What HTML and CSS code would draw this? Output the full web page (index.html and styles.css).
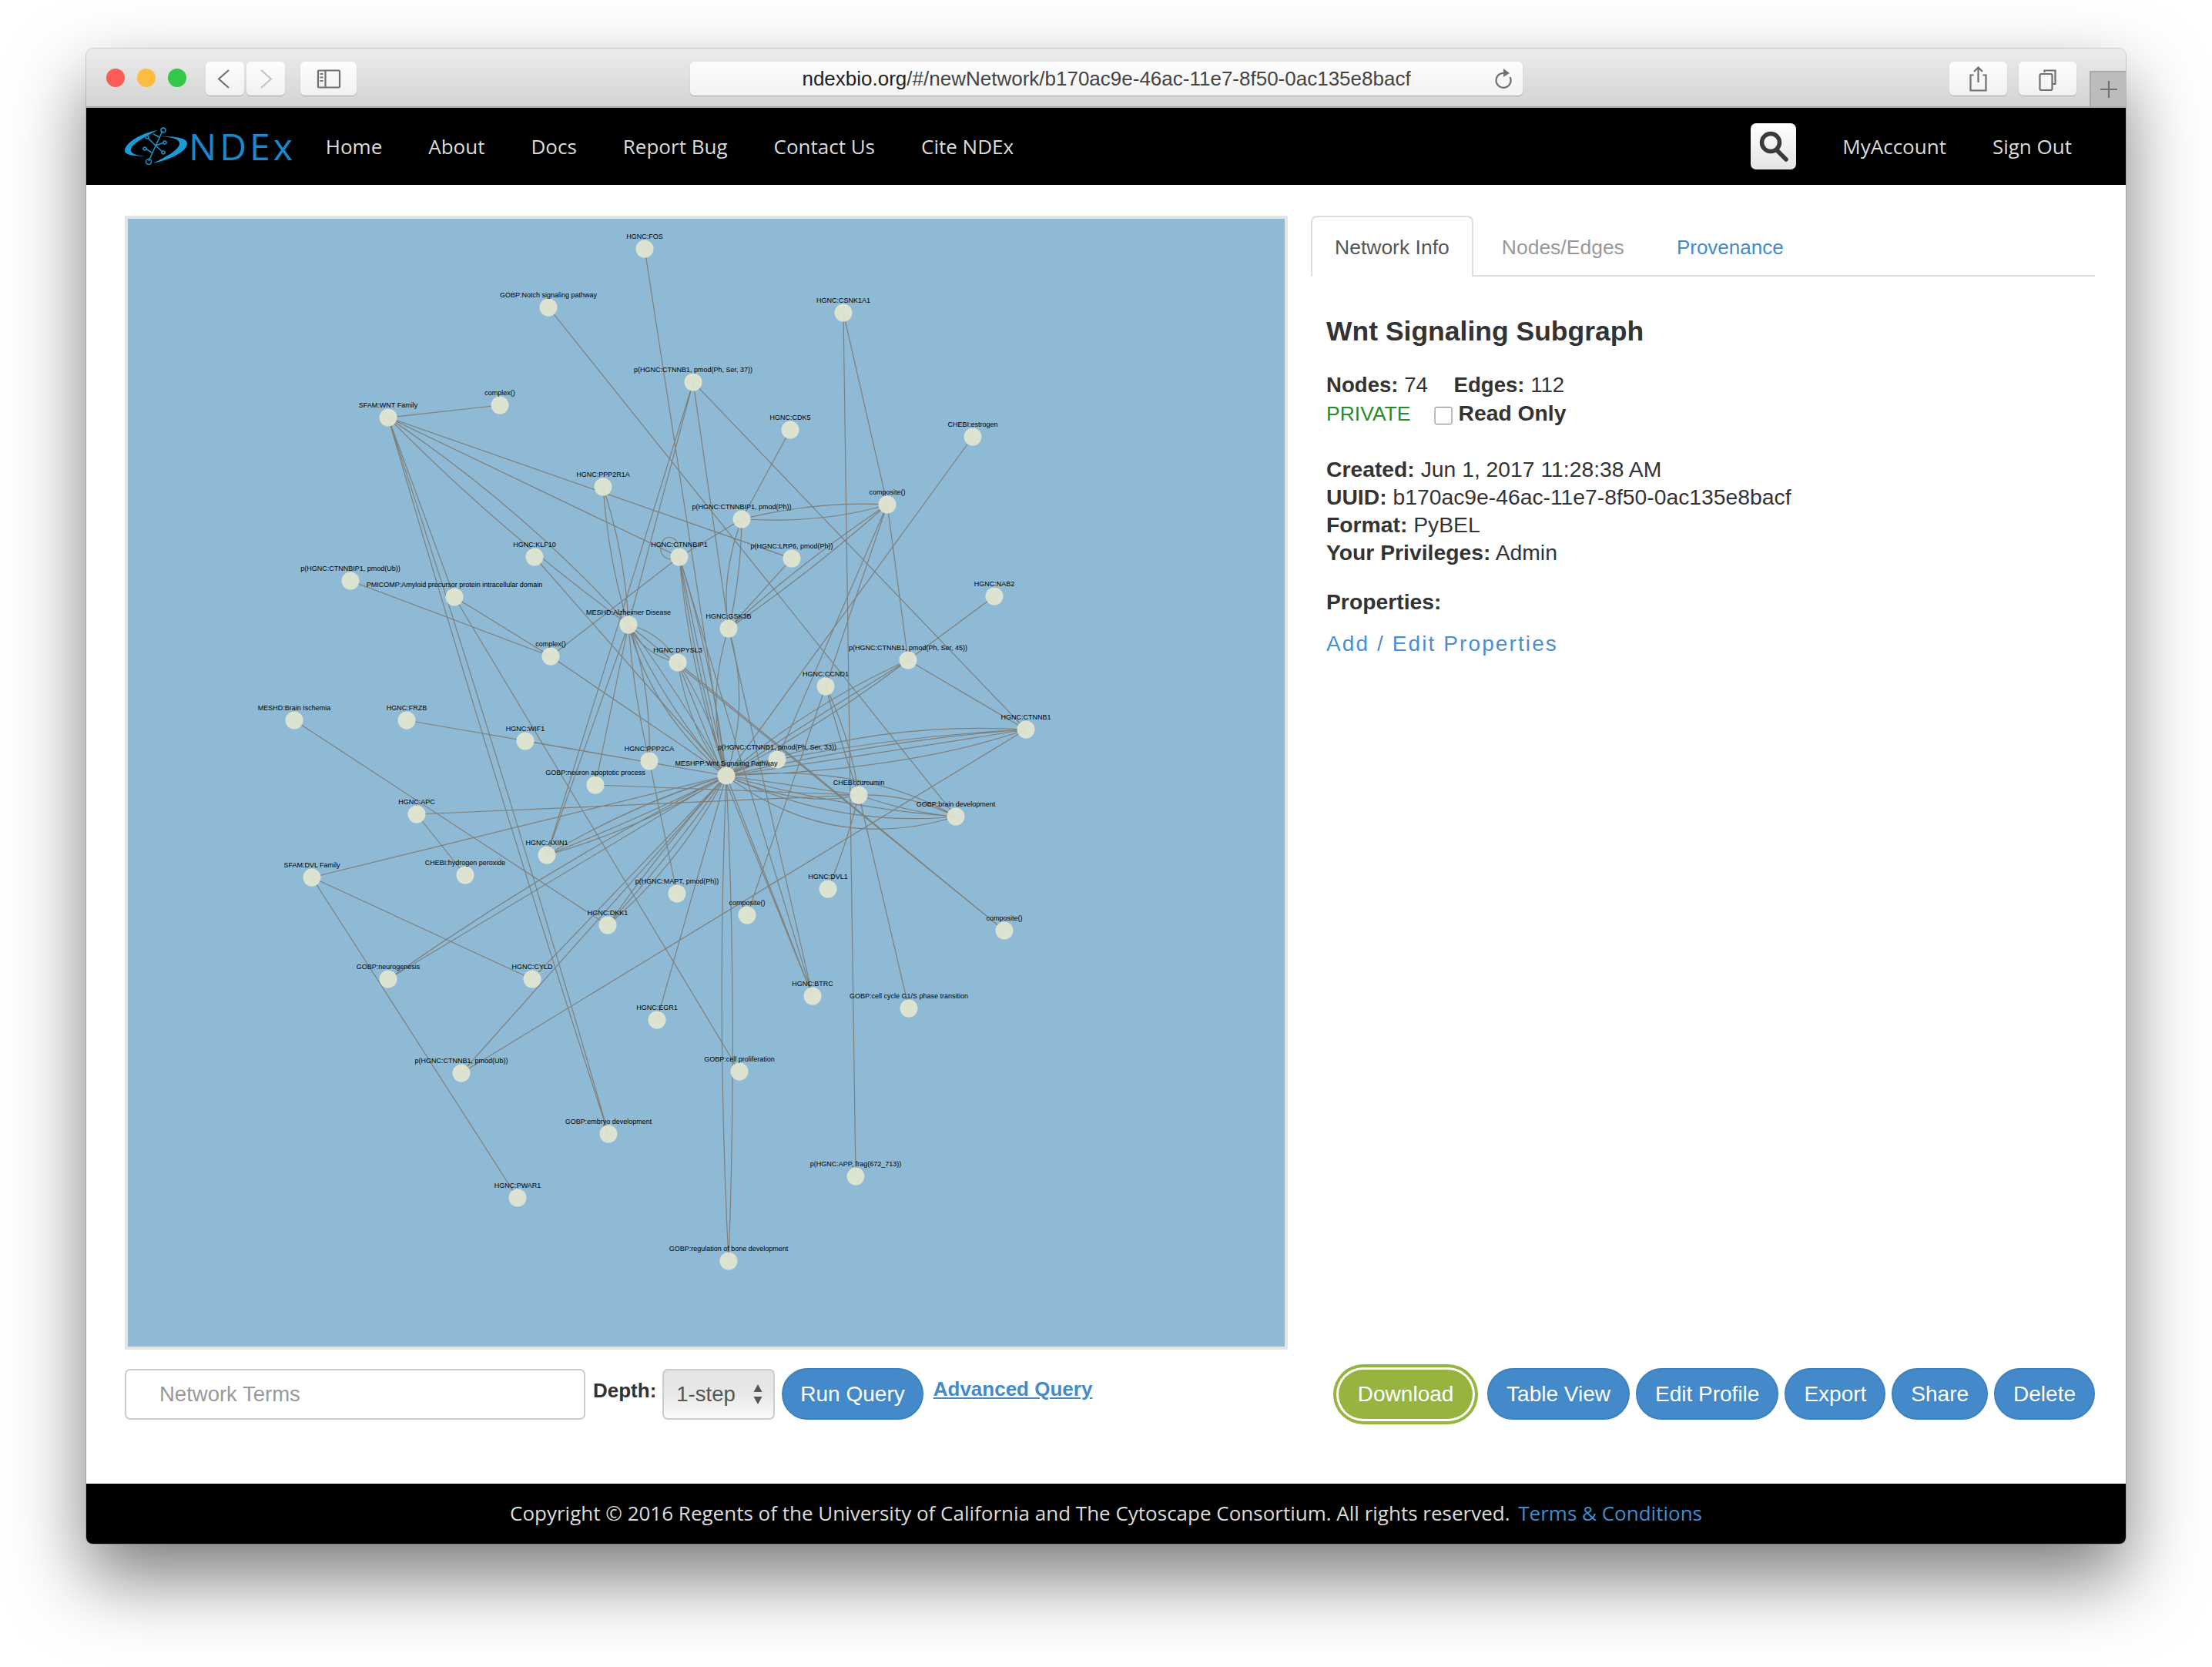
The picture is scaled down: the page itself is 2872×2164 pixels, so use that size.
FILE: index.html
```html
<!DOCTYPE html>
<html>
    <head>
        <meta http-equiv="Content-Type" content="text/html; charset=utf-8">
        <title>NDEx - Wnt Signaling Subgraph</title>
        <link rel="stylesheet" href="styles.css">
    </head>
    <body>
        <div class="window">
            <div class="toolbar">
                <div class="lights">
                    <span class="light red"></span>
                    <span class="light yellow"></span>
                    <span class="light green"></span>
                </div>
                <div class="pair">
                    <div class="tool-btn nav-btn">
                        <svg width="50" height="44" viewBox="0 0 50 44"><path class="ico" d="M30 11L17 22.500L30 34"/></svg>
                    </div>
                    <div class="tool-btn nav-btn">
                        <svg width="50" height="44" viewBox="0 0 50 44"><path class="ico faded" d="M19 11L32 22.500L19 34"/></svg>
                    </div>
                </div>
                <div class="tool-btn side-btn">
                    <svg width="73" height="44" viewBox="0 0 73 44">
                        <rect class="ico" x="23" y="11.500" width="28" height="22" rx="1"/>
                        <path class="ico" d="M32.500 11.500V33.500"/>
                        <path class="dots" d="M25.500 15h4v2h-4zM25.500 19.500h4v2h-4zM25.500 24h4v2h-4z"/>
                    </svg>
                </div>
                <div class="urlbar">
                    <span class="url"><b>ndexbio.org</b>/#/newNetwork/b170ac9e-46ac-11e7-8f50-0ac135e8bacf</span>
                    <svg class="reload" width="26" height="30" viewBox="0 0 26 30">
                        <path class="ico" d="M16.500 8.500A9.500 9.500 0 1 0 21.500 13"/>
                        <path class="dots" d="M13 2l8 6-8 5z"/>
                    </svg>
                </div>
                <div class="tool-btn wide-btn">
                    <svg width="75" height="44" viewBox="0 0 75 44">
                        <path class="ico" d="M31.500 17.500H27.500V37.500H47.500V17.500H43.500"/>
                        <path class="ico" d="M37.500 27V8M32 13L37.500 7.500L43 13"/>
                    </svg>
                </div>
                <div class="tool-btn wide-btn">
                    <svg width="75" height="44" viewBox="0 0 75 44">
                        <path class="ico" d="M33.500 14V11.500H47.500V29H43.500"/>
                        <rect class="ico" x="27.500" y="16" width="16" height="21" rx="2"/>
                    </svg>
                </div>
                <div class="newtab">
                    <svg width="24" height="24" viewBox="0 0 24 24"><path class="ico" d="M12 1V23M1 12H23"/></svg>
                </div>
            </div>

            <div class="navbar">
                <a class="brand" href="#">
                    <svg width="82" height="50" viewBox="0 0 82 50">
                        <path class="swoosh" d="M44 4C22 8 1 20 1 31C1 36 14 38 28 38C16 37 8 34 9 29C10 22 28 12 44 4Z"/>
                        <path class="swoosh" d="M38 47C60 42 82 32 82 21C82 15 70 12 48 12C64 13 73 16 72 22C71 30 55 38 38 47Z"/>
                        <path class="net" d="M50 5L32 44M41 24L31 14M41 24L50 32M41 24L52 20M36 33L28 28M46 13L38 9"/>
                        <circle class="net" cx="51" cy="4" r="3"/>
                        <circle class="net" cx="32" cy="45" r="3.500"/>
                        <circle class="net" cx="30" cy="13" r="2"/>
                        <circle class="net" cx="51" cy="33" r="2"/>
                        <circle class="net" cx="53" cy="20" r="2"/>
                        <circle class="net" cx="27" cy="28" r="2"/>
                    </svg>
                    <span class="brand-name">NDEx</span>
                </a>
                <ul class="menu">
                    <li><a href="#">Home</a></li>
                    <li><a href="#">About</a></li>
                    <li><a href="#">Docs</a></li>
                    <li><a href="#">Report Bug</a></li>
                    <li><a href="#">Contact Us</a></li>
                    <li><a href="#">Cite NDEx</a></li>
                </ul>
                <button class="search-btn">
                    <svg width="59" height="60" viewBox="0 0 59 60">
                        <circle class="lens" cx="26" cy="25" r="11.500"/>
                        <path class="lens" d="M34 35L46 47"/>
                    </svg>
                </button>
                <ul class="menu menu-right">
                    <li><a href="#">MyAccount</a></li>
                    <li><a href="#">Sign Out</a></li>
                </ul>
            </div>

            <div class="content">
                <div class="graph">
                    <svg width="1502" height="1464" viewBox="166 284 1502 1464">
                        <path class="edges" d="M837 323L943 1007M712 399L1241 1060M900 496L710 1110M900 496L816 811M900 496L946 816M900 496L1332 947
                            M504 542L649 526M504 542L1028 725M504 542L882 723M504 542L590 775M590 775L960 1391M590 775L715 852M455 754L715 852
                            M715 852L882 723M715 852L943 1007M816 811L773 1019M816 811L710 1110M816 811L1304 1208M880 860L1304 1208M880 860L1055 1293
                            M694 723L943 1007M882 723L963 674M882 723L1055 1293M1026 558L963 674M1152 655L1095 406M1152 655L1179 857M1152 655L1009 986
                            M1152 655L1072 891M1095 406L1111 1527M1028 725L946 816M1263 567L943 1007M1291 774L1179 857M1179 857L1332 947M1072 891L970 1188
                            M1332 947L599 1393M943 1007L599 1393M946 816L1055 1293M943 1007L1055 1293M541 1057L1115 1032M541 1057L604 1136M382 935L789 1201
                            M528 935L943 1007M682 962L943 1007M405 1139L943 1007M405 1139L691 1271M405 1139L672 1555M691 1271L943 1007M773 1019L1115 1032
                            M843 988L879 1160M853 1324L943 1007M1115 1032L1180 1309M943 1007L1115 1032"/>
                        <path class="edges" d="M504 542Q650 690 816 811M504 542Q680 660 816 811M504 542Q640 1010 790 1472M504 542Q655 1000 790 1472
                            M783 632Q790 730 816 811M783 632Q812 720 816 811M816 811Q822 900 843 988M816 811Q846 890 843 988
                            M816 811Q865 920 943 1007M816 811Q885 905 943 1007M816 811Q845 925 943 1007M816 811Q835 850 880 860M816 811Q860 822 880 860
                            M880 860Q895 950 943 1007M880 860Q925 930 943 1007M881 714C882 692 856 692 858 714C859 724 868 727 874 725
                            M882 723Q895 870 943 1007M882 723Q910 860 943 1007M882 723Q925 860 943 1007M882 723Q905 880 943 1007
                            M963 674Q1060 650 1152 655M963 674Q1070 680 1152 655M963 674Q935 750 946 816M963 674Q962 750 946 816
                            M1152 655Q1040 730 946 816M1152 655Q1050 745 946 816M946 816Q915 910 943 1007M946 816Q975 910 943 1007
                            M1179 857Q1060 930 943 1007M1179 857Q1070 940 943 1007M1179 857Q1050 915 943 1007M1072 891Q1090 960 1115 1032M1072 891Q1105 960 1115 1032
                            M1332 947Q1120 935 943 1007M1332 947Q1150 960 943 1007M1332 947Q1160 975 943 1007M1332 947Q1180 1000 943 1007M1332 947Q1170 955 1009 986
                            M943 1007Q1120 990 1241 1060M943 1007Q1100 1050 1241 1060M943 1007Q1090 1075 1241 1060M943 1007Q1080 1110 1241 1060
                            M943 1007Q1040 1050 1115 1032M1115 1032Q1180 1030 1241 1060M1115 1032Q1180 1055 1241 1060M1115 1032Q1100 1095 1075 1154
                            M943 1007Q930 1320 946 1637M943 1007Q958 1320 946 1637M504 1271Q720 1120 943 1007M504 1271Q740 1130 943 1007
                            M789 1201Q860 1100 943 1007M789 1201Q875 1105 943 1007M789 1201Q880 1125 943 1007
                            M710 1110Q830 1040 943 1007M710 1110Q825 1065 943 1007M710 1110Q835 1075 943 1007M710 1110Q820 1045 943 1007M1009 986Q975 990 943 1007"/>
                        <g class="nodes">
                            <circle cx="837" cy="323" r="11.500"/><circle cx="712" cy="399" r="11.500"/><circle cx="900" cy="496" r="11.500"/>
                            <circle cx="649" cy="526" r="11.500"/><circle cx="504" cy="542" r="11.500"/><circle cx="1095" cy="406" r="11.500"/>
                            <circle cx="1026" cy="558" r="11.500"/><circle cx="1263" cy="567" r="11.500"/><circle cx="783" cy="632" r="11.500"/>
                            <circle cx="1152" cy="655" r="11.500"/><circle cx="963" cy="674" r="11.500"/><circle cx="1028" cy="725" r="11.500"/>
                            <circle cx="694" cy="723" r="11.500"/><circle cx="882" cy="723" r="11.500"/><circle cx="455" cy="754" r="11.500"/>
                            <circle cx="590" cy="775" r="11.500"/><circle cx="1291" cy="774" r="11.500"/><circle cx="816" cy="811" r="11.500"/>
                            <circle cx="946" cy="816" r="11.500"/><circle cx="715" cy="852" r="11.500"/><circle cx="1179" cy="857" r="11.500"/>
                            <circle cx="880" cy="860" r="11.500"/><circle cx="1072" cy="891" r="11.500"/><circle cx="382" cy="935" r="11.500"/>
                            <circle cx="528" cy="935" r="11.500"/><circle cx="1332" cy="947" r="11.500"/><circle cx="682" cy="962" r="11.500"/>
                            <circle cx="1009" cy="986" r="11.500"/><circle cx="843" cy="988" r="11.500"/><circle cx="943" cy="1007" r="11.500"/>
                            <circle cx="773" cy="1019" r="11.500"/><circle cx="1115" cy="1032" r="11.500"/><circle cx="541" cy="1057" r="11.500"/>
                            <circle cx="1241" cy="1060" r="11.500"/><circle cx="710" cy="1110" r="11.500"/><circle cx="604" cy="1136" r="11.500"/>
                            <circle cx="405" cy="1139" r="11.500"/><circle cx="1075" cy="1154" r="11.500"/><circle cx="879" cy="1160" r="11.500"/>
                            <circle cx="970" cy="1188" r="11.500"/><circle cx="789" cy="1201" r="11.500"/><circle cx="1304" cy="1208" r="11.500"/>
                            <circle cx="504" cy="1271" r="11.500"/><circle cx="691" cy="1271" r="11.500"/><circle cx="1055" cy="1293" r="11.500"/>
                            <circle cx="1180" cy="1309" r="11.500"/><circle cx="853" cy="1324" r="11.500"/><circle cx="599" cy="1393" r="11.500"/>
                            <circle cx="960" cy="1391" r="11.500"/><circle cx="790" cy="1472" r="11.500"/><circle cx="1111" cy="1527" r="11.500"/>
                            <circle cx="672" cy="1555" r="11.500"/><circle cx="946" cy="1637" r="11.500"/>
                        </g>
                        <g class="labels">
                            <text x="837" y="310">HGNC:FOS</text>
                            <text x="712" y="386">GOBP:Notch signaling pathway</text>
                            <text x="900" y="483">p(HGNC:CTNNB1, pmod(Ph, Ser, 37))</text>
                            <text x="649" y="513">complex()</text>
                            <text x="504" y="529">SFAM:WNT Family</text>
                            <text x="1095" y="393">HGNC:CSNK1A1</text>
                            <text x="1026" y="545">HGNC:CDK5</text>
                            <text x="1263" y="554">CHEBI:estrogen</text>
                            <text x="783" y="619">HGNC:PPP2R1A</text>
                            <text x="1152" y="642">composite()</text>
                            <text x="963" y="661">p(HGNC:CTNNBIP1, pmod(Ph))</text>
                            <text x="1028" y="712">p(HGNC:LRP6, pmod(Ph))</text>
                            <text x="694" y="710">HGNC:KLF10</text>
                            <text x="882" y="710">HGNC:CTNNBIP1</text>
                            <text x="455" y="741">p(HGNC:CTNNBIP1, pmod(Ub))</text>
                            <text x="590" y="762">PMICOMP:Amyloid precursor protein intracellular domain</text>
                            <text x="1291" y="761">HGNC:NAB2</text>
                            <text x="816" y="798">MESHD:Alzheimer Disease</text>
                            <text x="946" y="803">HGNC:GSK3B</text>
                            <text x="715" y="839">complex()</text>
                            <text x="1179" y="844">p(HGNC:CTNNB1, pmod(Ph, Ser, 45))</text>
                            <text x="880" y="847">HGNC:DPYSL3</text>
                            <text x="1072" y="878">HGNC:CCND1</text>
                            <text x="382" y="922">MESHD:Brain Ischemia</text>
                            <text x="528" y="922">HGNC:FRZB</text>
                            <text x="1332" y="934">HGNC:CTNNB1</text>
                            <text x="682" y="949">HGNC:WIF1</text>
                            <text x="1009" y="973">p(HGNC:CTNNB1, pmod(Ph, Ser, 33))</text>
                            <text x="843" y="975">HGNC:PPP2CA</text>
                            <text x="943" y="994">MESHPP:Wnt Signaling Pathway</text>
                            <text x="773" y="1006">GOBP:neuron apoptotic process</text>
                            <text x="1115" y="1019">CHEBI:curcumin</text>
                            <text x="541" y="1044">HGNC:APC</text>
                            <text x="1241" y="1047">GOBP:brain development</text>
                            <text x="710" y="1097">HGNC:AXIN1</text>
                            <text x="604" y="1123">CHEBI:hydrogen peroxide</text>
                            <text x="405" y="1126">SFAM:DVL Family</text>
                            <text x="1075" y="1141">HGNC:DVL1</text>
                            <text x="879" y="1147">p(HGNC:MAPT, pmod(Ph))</text>
                            <text x="970" y="1175">composite()</text>
                            <text x="789" y="1188">HGNC:DKK1</text>
                            <text x="1304" y="1195">composite()</text>
                            <text x="504" y="1258">GOBP:neurogenesis</text>
                            <text x="691" y="1258">HGNC:CYLD</text>
                            <text x="1055" y="1280">HGNC:BTRC</text>
                            <text x="1180" y="1296">GOBP:cell cycle G1/S phase transition</text>
                            <text x="853" y="1311">HGNC:EGR1</text>
                            <text x="599" y="1380">p(HGNC:CTNNB1, pmod(Ub))</text>
                            <text x="960" y="1378">GOBP:cell proliferation</text>
                            <text x="790" y="1459">GOBP:embryo development</text>
                            <text x="1111" y="1514">p(HGNC:APP, frag(672_713))</text>
                            <text x="672" y="1542">HGNC:PWAR1</text>
                            <text x="946" y="1624">GOBP:regulation of bone development</text>
                        </g>
                    </svg>
                </div>

                <div class="info">
                    <ul class="tabs">
                        <li class="tab active">Network Info</li>
                        <li class="tab muted">Nodes/Edges</li>
                        <li class="tab linked">Provenance</li>
                    </ul>
                    <h1>Wnt Signaling Subgraph</h1>
                    <p class="counts">
                        <b>Nodes:</b> 74 <b class="edges-count">Edges:</b> 112<br>
                        <span class="private">PRIVATE</span><label class="readonly"><input type="checkbox"><b>Read Only</b></label>
                    </p>
                    <p class="details">
                        <b>Created:</b> Jun 1, 2017 11:28:38 AM<br>
                        <b>UUID:</b> b170ac9e-46ac-11e7-8f50-0ac135e8bacf<br>
                        <b>Format:</b> PyBEL<br>
                        <b>Your Privileges:</b> Admin
                    </p>
                    <p class="props"><b>Properties:</b></p>
                    <a class="edit-props" href="#">Add / Edit Properties</a>
                </div>

                <div class="query">
                    <input class="terms" type="text" placeholder="Network Terms">
                    <span class="depth">Depth:</span>
                    <div class="select">
                        <span>1-step</span>
                        <svg width="12" height="26" viewBox="0 0 12 26"><path class="arrows" d="M6 0L11.500 10H.5zM6 26L.5 16H11.500z"/></svg>
                    </div>
                    <button class="btn">Run Query</button>
                    <a class="advanced" href="#">Advanced Query</a>
                </div>

                <div class="actions">
                    <button class="btn btn-download">Download</button>
                    <button class="btn">Table View</button>
                    <button class="btn">Edit Profile</button>
                    <button class="btn">Export</button>
                    <button class="btn">Share</button>
                    <button class="btn">Delete</button>
                </div>
            </div>

            <div class="footer">
                Copyright © 2016 Regents of the University of California and The Cytoscape Consortium. All rights reserved.
                <a href="#">Terms &amp; Conditions</a>
            </div>
        </div>
    </body>
</html>
```

FILE: styles.css
```css
* {
    box-sizing: border-box;
}

html, body {
    margin: 0;
    background: white;
}

body {
    height: 2164px;
    padding: 63px 112px 0;
    overflow: hidden;
    font-family: "Liberation Sans", Arial, sans-serif;
    color: #333;
}

ul {
    list-style: none;
    margin: 0;
    padding: 0;
}

a {
    text-decoration: none;
}

.window {
    display: flex;
    flex-direction: column;
    height: 1941px;
    border-radius: 10px 10px 8px 8px;
    background: white;
    box-shadow: 0 0 0 1px rgba(0, 0, 0, .15), 0 44px 96px rgba(0, 0, 0, .52);
}

/* safari toolbar */

.toolbar {
    display: flex;
    align-items: flex-start;
    height: 77px;
    padding-top: 17px;
    border-bottom: 2px solid #aaa;
    border-radius: 10px 10px 0 0;
    background: linear-gradient(#ececec, #d3d3d3);
}

.lights {
    display: flex;
    gap: 16px;
    margin: 9px 25px 0 26px;
}

.light {
    width: 24px;
    height: 24px;
    border-radius: 50%;
}

.red { background: #fc5b57; }
.yellow { background: #fdbc40; }
.green { background: #34c84a; }

.pair {
    display: flex;
    gap: 3px;
    margin-right: 20px;
}

.tool-btn {
    height: 44px;
    border-radius: 6px;
    background: linear-gradient(#fdfdfd, #f1f1f1);
    box-shadow: 0 1px 1px rgba(0, 0, 0, .22);
}

.tool-btn svg {
    display: block;
}

.nav-btn { width: 50px; }
.side-btn { width: 73px; margin-right: 433px; }
.wide-btn { width: 75px; margin-right: 15px; }

.ico {
    fill: none;
    stroke: #707070;
    stroke-width: 2.2;
}

.faded { stroke: #c4c4c4; }
.dots { fill: #707070; }

.urlbar {
    position: relative;
    display: flex;
    align-items: center;
    justify-content: center;
    width: 1083px;
    height: 44px;
    margin-right: 554px;
    border-radius: 6px;
    background: linear-gradient(#fdfdfd, #f3f3f3);
    box-shadow: 0 1px 1px rgba(0, 0, 0, .22);
    font-size: 26px;
    color: #444;
}

.url b {
    font-weight: normal;
    color: #222;
}

.reload {
    position: absolute;
    top: 7px;
    right: 12px;
}

.newtab {
    display: flex;
    align-items: center;
    justify-content: center;
    width: 47px;
    height: 46px;
    margin: 12px 0 0 2px;
    border-top: 2px solid #a9a9a9;
    border-left: 2px solid #a9a9a9;
    background: #bcbcbc;
}

/* ndex header */

.navbar {
    display: flex;
    align-items: center;
    height: 100px;
    padding: 0 40px 0 49px;
    background: black;
    font-family: "Open Sans", sans-serif;
    font-size: 26px;
}

.brand {
    display: flex;
    align-items: center;
    gap: 2px;
    margin-right: 9px;
}

.swoosh { fill: #1a9bd7; }

.net {
    fill: none;
    stroke: #1a8fc8;
    stroke-width: 1.6;
}

.brand-name {
    font-size: 48px;
    line-height: 1;
    letter-spacing: 4px;
    color: #1a88cc;
}

.menu {
    display: flex;
    flex: 1;
}

.menu a {
    display: block;
    padding: 0 30px;
    color: #dcdcdc;
}

.menu-right {
    flex: none;
}

.search-btn {
    width: 59px;
    height: 60px;
    margin-right: 30px;
    padding: 0;
    border: 0;
    border-radius: 7px;
    background: linear-gradient(white, #e4e4e4);
}

.search-btn svg {
    display: block;
}

.lens {
    fill: none;
    stroke: #3a3a3a;
    stroke-width: 5.5;
    stroke-linecap: round;
}

/* main */

.content {
    display: grid;
    flex: 1;
    grid-template-columns: 1510px 1018px;
    grid-template-rows: 1472px auto;
    align-content: start;
    column-gap: 30px;
    row-gap: 24px;
    padding: 40px 40px 0 50px;
}

.graph {
    border: 4px solid #e4e4e4;
    background: #8fbad5;
}

.graph svg {
    display: block;
}

.edges {
    fill: none;
    stroke: #7f7f7a;
    stroke-width: 1.2;
}

.nodes circle {
    fill: #e4e6d0;
    fill-opacity: .92;
}

.labels text {
    font-size: 9px;
    fill: black;
    text-anchor: middle;
}

.info {
    font-size: 28.3px;
    line-height: 36px;
}

.tabs {
    display: flex;
    height: 79px;
    border-bottom: 2px solid #ddd;
    font-size: 26.500px;
}

.tab {
    height: 79px;
    padding: 23px 31px 0;
    color: #555;
}

.active {
    padding: 21px 29px 0;
    border: 2px solid #ddd;
    border-bottom: 0;
    border-radius: 8px 8px 0 0;
    background: white;
}

.muted { padding: 23px 37px 0; color: #999; }
.linked { padding: 23px 31px 0; font-size: 26px; color: #428bca; }

h1 {
    margin: 51px 0 32px 20px;
    font-size: 35.500px;
    line-height: 40px;
}

.info p {
    margin: 0 0 36px 20px;
}

.counts {
    font-size: 27.6px;
}

.edges-count {
    margin-left: 26px;
}

.private {
    font-size: 26.500px;
    color: #2a8a2a;
}

.readonly {
    margin-left: 31px;
    font-size: 28.3px;
}

.readonly input {
    width: 24px;
    height: 23px;
    margin: 0 7px 0 0;
    vertical-align: -5px;
}

.info .details {
    margin-bottom: 28px;
}

.info .props {
    margin-bottom: 18px;
}

.edit-props {
    margin-left: 20px;
    font-size: 28px;
    letter-spacing: 2.1px;
    color: #4a8fd0;
}

/* bottom row */

.query, .actions {
    display: flex;
    align-items: center;
}

.terms {
    width: 598px;
    height: 66px;
    margin-right: 10px;
    padding: 0 43px;
    border: 2px solid #ccc;
    border-radius: 7px;
    font-family: inherit;
    font-size: 27.500px;
}

.terms::placeholder {
    color: #999;
}

.depth {
    margin: 0 8px 8px 0;
    font-size: 26px;
    font-weight: bold;
}

.select {
    display: flex;
    align-items: center;
    justify-content: space-between;
    width: 146px;
    height: 66px;
    margin-right: 9px;
    padding: 0 14px 0 16px;
    border: 2px solid #ccc;
    border-radius: 7px;
    background: linear-gradient(#e4e4e4, #e8e8e8 50%, #fafafa);
    font-size: 27.500px;
    color: #555;
}

.arrows {
    fill: #555;
}

.btn {
    height: 67px;
    padding: 0 23px;
    border: 2px solid #3e82bd;
    border-radius: 34px;
    background: #448aca;
    font-family: inherit;
    font-size: 28px;
    color: white;
}

.query .btn {
    padding: 0 22px;
}

.advanced {
    margin: 0 0 12px 13px;
    font-size: 26px;
    font-weight: bold;
    text-decoration: underline;
    color: #428bca;
}

.actions {
    justify-content: flex-end;
    gap: 8px;
}

.btn-download {
    width: 174px;
    height: 64px;
    margin: 0 11px 0 0;
    padding: 0;
    border: 0;
    background: #97b43e;
    box-shadow: 0 0 0 3px white, 0 0 0 7px #97b43e;
}

.footer {
    height: 78px;
    border-radius: 0 0 8px 8px;
    background: black;
    font-family: "Open Sans", sans-serif;
    font-size: 26px;
    line-height: 76px;
    text-align: center;
    color: #dcdcdc;
}

.footer a {
    margin-left: 4px;
    color: #3f8ed1;
}
```
